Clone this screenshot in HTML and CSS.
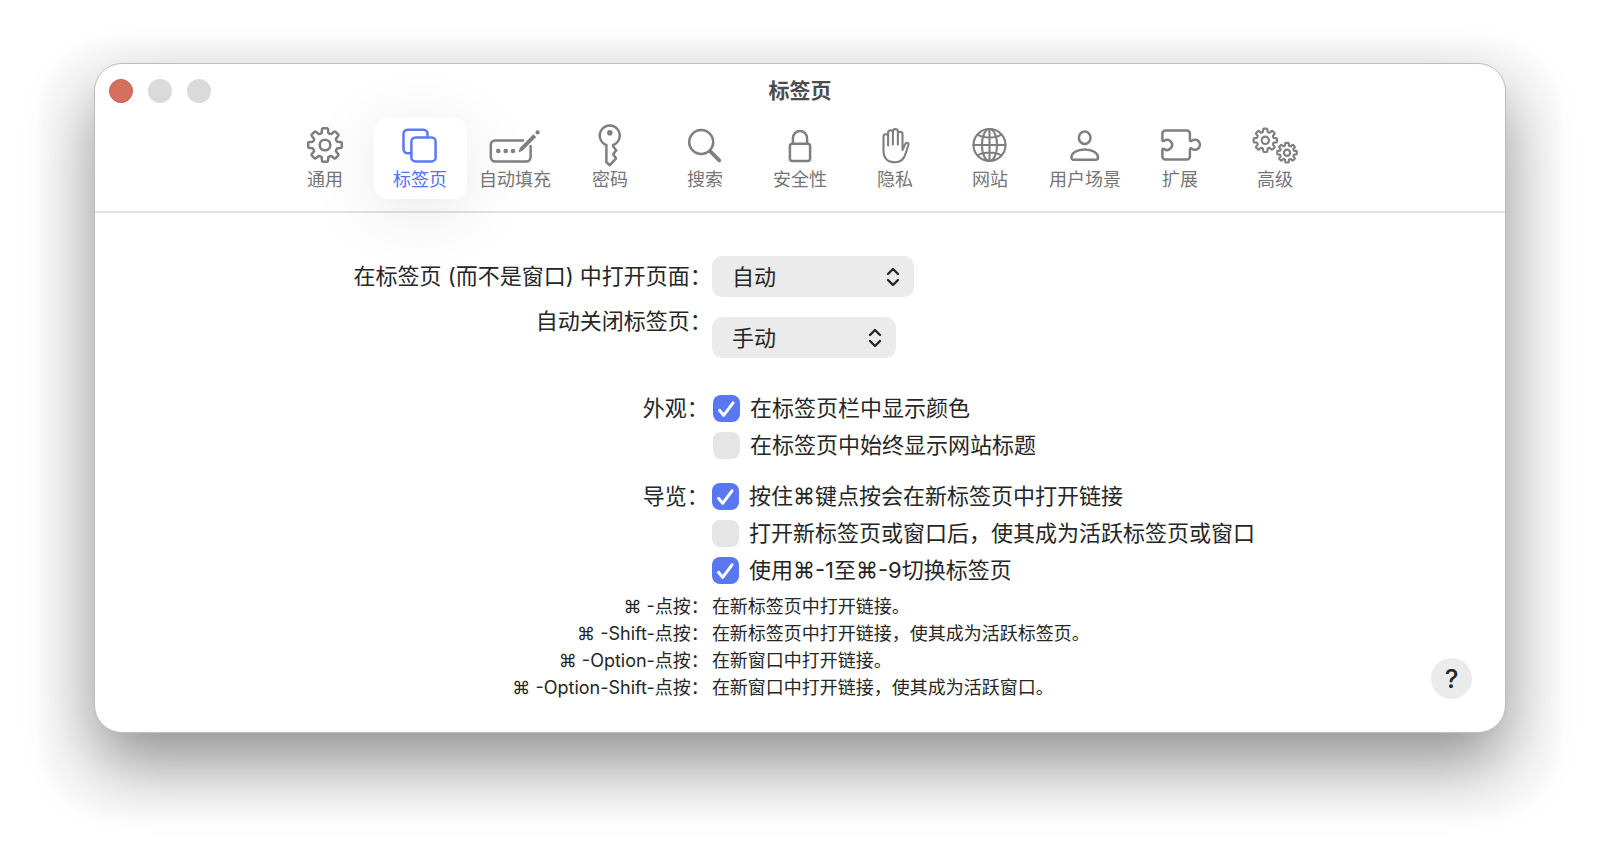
FILE: index.html
```html
<!DOCTYPE html>
<html lang="zh-CN">
<head>
    <meta charset="UTF-8">
    <meta name="viewport" content="width=device-width, initial-scale=1.0">
    <title>标签页</title>
    <link rel="stylesheet" href="styles.css">
</head>
<body>
    <svg class="defs" aria-hidden="true">
        <symbol id="gear" viewBox="-18 -18 36 36" overflow="visible">
            <path vector-effect="non-scaling-stroke" d="M-2.1-16.8L2.1-16.8Q3.2-16.6 3.1-15.1L3.3-12.2Q4.5-10.9 6.3-10.9L8.5-12.8Q9.5-14 10.4-13.3L13.3-10.4Q14-9.5 12.8-8.5L10.9-6.3Q10.9-4.5 12.2-3.3L15.1-3.1Q16.6-3.2 16.8-2.1L16.8 2.1Q16.6 3.2 15.1 3.1L12.2 3.3Q10.9 4.5 10.9 6.3L12.8 8.5Q14 9.5 13.3 10.4L10.4 13.3Q9.5 14 8.5 12.8L6.3 10.9Q4.5 10.9 3.3 12.2L3.1 15.1Q3.2 16.6 2.1 16.8L-2.1 16.8Q-3.2 16.6-3.1 15.1L-3.3 12.2Q-4.5 10.9-6.3 10.9L-8.5 12.8Q-9.5 14-10.4 13.3L-13.3 10.4Q-14 9.5-12.8 8.5L-10.9 6.3Q-10.9 4.5-12.2 3.3L-15.1 3.1Q-16.6 3.2-16.8 2.1L-16.8-2.1Q-16.6-3.2-15.1-3.1L-12.2-3.3Q-10.9-4.5-10.9-6.3L-12.8-8.5Q-14-9.5-13.3-10.4L-10.4-13.3Q-9.5-14-8.5-12.8L-6.3-10.9Q-4.5-10.9-3.3-12.2L-3.1-15.1Q-3.2-16.6-2.1-16.8Z"/>
            <circle vector-effect="non-scaling-stroke" r="5.3"/>
        </symbol>
    </svg>

    <main class="window">
        <header class="titlebar">
            <div class="lights">
                <button type="button" class="light close" aria-label="关闭"></button>
                <button type="button" class="light" aria-label="最小化" disabled></button>
                <button type="button" class="light" aria-label="缩放" disabled></button>
            </div>
            <h1 class="title">标签页</h1>
        </header>

        <nav class="toolbar">
            <button type="button" class="tab">
                <svg class="icon" viewBox="0 0 56 40"><use href="#gear" x="10" y="2" width="36" height="36"/></svg>
                <span>通用</span>
            </button>
            <button type="button" class="tab active">
                <svg class="icon" viewBox="0 0 56 40">
                    <path d="M19 28.3h-3.5a4 4 0 0 1-4-4V8.8a4 4 0 0 1 4-4h16a4 4 0 0 1 4 4v3.4"/>
                    <rect x="19.4" y="12.4" width="24.2" height="24" rx="4"/>
                </svg>
                <span>标签页</span>
            </button>
            <button type="button" class="tab">
                <svg class="icon" viewBox="0 0 56 40">
                    <path d="M36 15.4H8.3a4.5 4.5 0 0 0-4.5 4.5v12.2a4.5 4.5 0 0 0 4.5 4.5h30.8a4.5 4.5 0 0 0 4.5-4.5V21"/>
                    <g class="solid">
                        <circle cx="11.3" cy="26" r="2.3"/>
                        <circle cx="18.7" cy="26" r="2.3"/>
                        <circle cx="26" cy="26" r="2.3"/>
                        <path d="M31.4 27.4l1.4-4.3L46.3 9.2l2.9 2.8-13.7 13.8z"/>
                        <circle cx="50.6" cy="7.4" r="2.1"/>
                    </g>
                </svg>
                <span>自动填充</span>
            </button>
            <button type="button" class="tab">
                <svg class="icon" viewBox="0 0 56 40">
                    <path d="M24.4 20v17.2l3.4 3 6.3-6.8-3-4.2 3.2-3.8-3.2-4.2V20A10 10 0 1 0 24.4 20z"/>
                    <circle class="solid" cx="27.8" cy="7.8" r="2.8"/>
                </svg>
                <span>密码</span>
            </button>
            <button type="button" class="tab">
                <svg class="icon" viewBox="0 0 56 40">
                    <circle cx="24.2" cy="17" r="12"/>
                    <path class="thick" d="M33.3 26.3l9 9"/>
                </svg>
                <span>搜索</span>
            </button>
            <button type="button" class="tab">
                <svg class="icon" viewBox="0 0 56 40">
                    <rect x="17.9" y="18.8" width="20.2" height="17.2" rx="2.5"/>
                    <path d="M20.9 18.8V13.2a7.1 7.1 0 0 1 14.2 0v5.6"/>
                </svg>
                <span>安全性</span>
            </button>
            <button type="button" class="tab">
                <svg class="icon thin" viewBox="0 0 56 40">
                    <path d="M21.1 20.5V11.5a2.3 2.3 0 0 0-4.6 0V26c0 7 4 11.3 11.3 11.3 5.2 0 9.2-2.3 11-9.3l2.6-8c.8-2.6-2.4-3-3.2-1l-2.7 6V9a2.3 2.3 0 0 0-4.6 0v10.5M21.1 12V7.6a2.4 2.4 0 0 1 4.8 0V19.5M25.9 8V6.6a2.5 2.5 0 0 1 5 0V10"/>
                </svg>
                <span>隐私</span>
            </button>
            <button type="button" class="tab">
                <svg class="icon thin" viewBox="0 0 56 40">
                    <circle cx="27.5" cy="20" r="16"/>
                    <ellipse cx="27.5" cy="20" rx="7.6" ry="16"/>
                    <path d="M27.5 4v32M11.5 20h32M15.5 9.5c6 4 18 4 24 0M15.5 30.5c6-4 18-4 24 0"/>
                </svg>
                <span>网站</span>
            </button>
            <button type="button" class="tab">
                <svg class="icon" viewBox="0 0 56 40">
                    <ellipse cx="27.7" cy="12.7" rx="5.8" ry="6.2"/>
                    <path d="M14.4 32.5c0-4.5 5.5-8.1 13.3-8.1S41 28 41 32.5c0 1.6-.8 2.2-2.2 2.2H16.6c-1.4 0-2.2-.6-2.2-2.2z"/>
                </svg>
                <span>用户场景</span>
            </button>
            <button type="button" class="tab">
                <svg class="icon" viewBox="0 0 56 40">
                    <path d="M10.4 14.9V8.4a3 3 0 0 1 3-3h21.5a3 3 0 0 1 3 3v6.6c0 1.2 1.2 1.4 2 .7a5 5 0 1 1 0 8c-.8-.7-2-.5-2 .7v7.2a3 3 0 0 1-3 3H13.4a3 3 0 0 1-3-3v-6.8c0-1.2 1-1.4 1.9-.7a5 5 0 1 0 0-8.4c-.9.7-1.9.5-1.9-.8z"/>
                </svg>
                <span>扩展</span>
            </button>
            <button type="button" class="tab">
                <svg class="icon thin" viewBox="0 0 56 40">
                    <use href="#gear" x="5.8" y="2.8" width="25" height="25"/>
                    <use href="#gear" x="29.5" y="17.2" width="21" height="21"/>
                </svg>
                <span>高级</span>
            </button>
        </nav>

        <form class="pane">
            <div class="row">
                <label class="label" for="open-pages">在标签页 (而不是窗口) 中打开页面：</label>
                <div class="popup popup-wide">
                    <select id="open-pages">
                        <option>自动</option>
                        <option>永不</option>
                        <option>始终</option>
                    </select>
                    <svg class="arrows" viewBox="0 0 14 20"><path d="M2 7l5-5 5 5M2 13l5 5 5-5"/></svg>
                </div>
            </div>
            <div class="row close-row">
                <label class="label" for="close-tabs">自动关闭标签页：</label>
                <div class="popup">
                    <select id="close-tabs">
                        <option>手动</option>
                        <option>一天后</option>
                        <option>一周后</option>
                    </select>
                    <svg class="arrows" viewBox="0 0 14 20"><path d="M2 7l5-5 5 5M2 13l5 5 5-5"/></svg>
                </div>
            </div>

            <div class="row look" role="group" aria-labelledby="look-label">
                <div class="label group-label" id="look-label">外观：</div>
                <div class="checks">
                    <label class="check"><input type="checkbox" checked>在标签页栏中显示颜色</label>
                    <label class="check"><input type="checkbox">在标签页中始终显示网站标题</label>
                </div>
            </div>

            <div class="row browse" role="group" aria-labelledby="browse-label">
                <div class="label group-label" id="browse-label">导览：</div>
                <div class="checks">
                    <label class="check"><input type="checkbox" checked>按住⌘键点按会在新标签页中打开链接</label>
                    <label class="check"><input type="checkbox">打开新标签页或窗口后，使其成为活跃标签页或窗口</label>
                    <label class="check"><input type="checkbox" checked>使用⌘-1至⌘-9切换标签页</label>
                </div>
            </div>

            <div class="bottom">
                <dl class="shortcuts">
                    <dt>⌘ -点按：</dt>
                    <dd>在新标签页中打开链接。</dd>
                    <dt>⌘ -Shift-点按：</dt>
                    <dd>在新标签页中打开链接，使其成为活跃标签页。</dd>
                    <dt>⌘ -Option-点按：</dt>
                    <dd>在新窗口中打开链接。</dd>
                    <dt>⌘ -Option-Shift-点按：</dt>
                    <dd>在新窗口中打开链接，使其成为活跃窗口。</dd>
                </dl>
                <button type="button" class="help">?</button>
            </div>
        </form>
    </main>
</body>
</html>
```
FILE: styles.css
```css
* {
    box-sizing: border-box;
}

body {
    margin: 0;
    min-height: 100vh;
    padding: 63px 94px;
    background: #fff;
    color: #262626;
    font-family: Inter, "Noto Sans CJK SC", sans-serif;
    font-size: 22px;
}

button, select {
    font: inherit;
    border: none;
    padding: 0;
}

.defs {
    position: absolute;
    width: 0;
    height: 0;
}

.window {
    background: #fff;
    border: 1px solid #bdbdbd;
    border-radius: 28px;
    box-shadow: 0 31px 66px rgba(0, 0, 0, 0.42), 0 31px 8px 54px rgba(0, 0, 0, 0.02);
}

/* Title bar */
.titlebar {
    display: grid;
    grid-template-columns: 1fr auto 1fr;
    align-items: center;
    height: 53px;
    padding: 0 14px;
}

.lights {
    display: flex;
    gap: 15px;
}

.light {
    width: 24px;
    height: 24px;
    border-radius: 50%;
    background: #dadada;
}

.light.close {
    background: #d4705f;
    border: 1px solid #cd5a4b;
}

.title {
    margin: 0;
    font-size: 21px;
    line-height: 24px;
    font-weight: 700;
    color: #4c4c4c;
}

/* Toolbar */
.toolbar {
    display: flex;
    justify-content: center;
    gap: 2px;
    padding: 1px 0 12px;
    border-bottom: 2px solid #e2e2e2;
}

.tab {
    display: flex;
    flex-direction: column;
    align-items: center;
    gap: 3px;
    width: 93px;
    height: 81px;
    padding-top: 7px;
    border-radius: 13px;
    background: none;
    color: #757575;
    font-size: 18px;
    line-height: 24px;
    white-space: nowrap;
}

.tab.active {
    background: #fff;
    color: #5472f0;
    box-shadow: 0 12px 70px rgba(0, 0, 0, 0.1);
}

.icon {
    width: 56px;
    height: 40px;
    overflow: visible;
    fill: none;
    stroke: #7f7f7f;
    stroke-width: 2.5;
    stroke-linecap: round;
    stroke-linejoin: round;
}

.active .icon {
    stroke: #5b78f5;
}

.icon.thin {
    stroke-width: 2.1;
}

.icon .thick {
    stroke-width: 3.8;
}

.icon .solid {
    fill: #7f7f7f;
    stroke: none;
}

/* Settings */
.pane {
    padding: 43px 0 31px;
}

.row, .shortcuts {
    display: grid;
    grid-template-columns: 7fr 9fr;
}

.label {
    text-align: right;
    line-height: 41px;
    white-space: nowrap;
}

.popup {
    display: grid;
    align-items: center;
    width: 184px;
}

.popup-wide {
    width: 202px;
}

.popup select,
.popup .arrows {
    grid-area: 1 / 1;
}

.popup select {
    appearance: none;
    width: 100%;
    height: 41px;
    padding: 0 20px;
    border-radius: 10px;
    background: #ebebeb;
    color: #262626;
}

.arrows {
    justify-self: end;
    width: 14px;
    height: 20px;
    margin-right: 14px;
    fill: none;
    stroke: #262626;
    stroke-width: 2.4;
    stroke-linecap: round;
    stroke-linejoin: round;
    pointer-events: none;
}

.close-row .label {
    padding-top: 4px;
}

.close-row .popup {
    margin-top: 20px;
}

.label.group-label {
    padding-right: 3px;
    line-height: 37px;
}

.look {
    margin-top: 32px;
}

.look .checks {
    padding-left: 1px;
}

.browse {
    margin-top: 14px;
}

.check {
    display: flex;
    align-items: center;
    gap: 10px;
    height: 37px;
    line-height: 37px;
    white-space: nowrap;
}

.check input {
    appearance: none;
    width: 27px;
    height: 27px;
    margin: 0;
    border-radius: 8px;
    background: #e5e5e5;
}

.check input:checked {
    background: #5977f1 url("data:image/svg+xml,%3Csvg xmlns='http://www.w3.org/2000/svg' viewBox='0 0 27 27'%3E%3Cpath d='M6.5 15.3l4.2 5L20 7.8' fill='none' stroke='white' stroke-width='3' stroke-linecap='round' stroke-linejoin='round'/%3E%3C/svg%3E");
}

.bottom {
    display: grid;
    margin-top: 4px;
}

.shortcuts, .help {
    grid-area: 1 / 1;
}

.shortcuts {
    margin: 0;
    font-size: 18px;
    line-height: 27px;
}

.shortcuts dt {
    padding-right: 3px;
    text-align: right;
}

.shortcuts dd {
    margin: 0;
}

.help {
    align-self: end;
    justify-self: end;
    width: 41px;
    height: 41px;
    margin: 0 33px 2px 0;
    border-radius: 50%;
    background: #ebebeb;
    color: #262626;
    font-size: 26px;
    font-weight: 500;
    line-height: 41px;
}
```
